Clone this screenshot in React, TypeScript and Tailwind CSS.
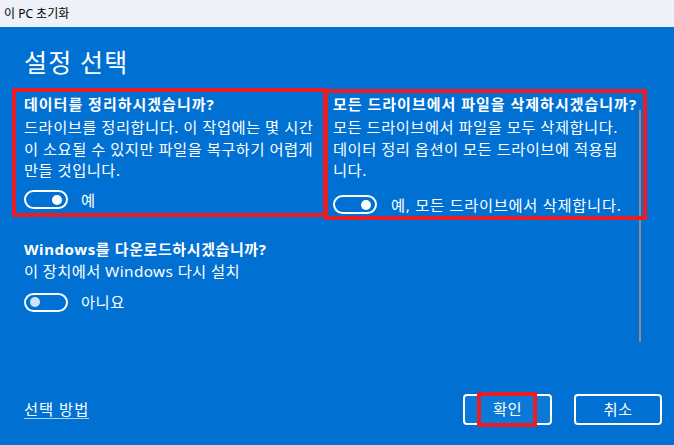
import React from "react";

function Toggle({ on }: { on: boolean }) {
  return (
    <div
      className={
        "w-[44px] h-[19px] rounded-full border-2 border-white flex items-center shrink-0 " +
        (on ? "justify-end pr-[4px]" : "justify-start pl-[4px]")
      }
    >
      <div className={"w-[10px] h-[10px] rounded-full " + (on ? "bg-white" : "bg-[#cfe4f8]")} />
    </div>
  );
}

export default function App() {
  return (
    <div className="w-[674px] h-[445px] flex flex-col bg-[#0071d3] text-white overflow-hidden font-['Noto_Sans','Noto_Sans_CJK_KR',sans-serif]">
      <div className="h-[27px] shrink-0 bg-[#eef2f8] text-black text-[12px] pl-[4px] flex items-center">
        이 PC 초기화
      </div>
      <div className="flex-1 flex flex-col pl-[24px] pr-[12px] relative">
        <h1 className="text-[25px] leading-[32px] mt-[19px] tracking-[1.2px]">설정 선택</h1>
        <div className="grid grid-cols-[309px_307px] mt-[16px]">
          <div className="flex flex-col">
            <div className="text-[15px] leading-[20px] font-bold whitespace-nowrap tracking-[1px]">데이터를 정리하시겠습니까?</div>
            <div className="text-[15.3px] leading-[21.5px] mt-[3px] whitespace-nowrap tracking-[0.5px]">
              드라이브를 정리합니다. 이 작업에는 몇 시간
              <br />이 소요될 수 있지만 파일을 복구하기 어렵게
              <br />만들 것입니다.
            </div>
            <div className="flex items-center mt-[8px] gap-[13px]">
              <Toggle on />
              <span className="text-[15.3px] leading-[20px]">예</span>
            </div>
          </div>
          <div className="flex flex-col">
            <div className="text-[15px] leading-[20px] font-bold whitespace-nowrap tracking-[1px]">모든 드라이브에서 파일을 삭제하시겠습니까?</div>
            <div className="text-[15.3px] leading-[21.5px] mt-[3px] whitespace-nowrap tracking-[0.5px]">
              모든 드라이브에서 파일을 모두 삭제합니다.
              <br />데이터 정리 옵션이 모든 드라이브에 적용됩
              <br />니다.
            </div>
            <div className="flex items-center mt-[13px] gap-[14px]">
              <Toggle on />
              <span className="text-[15.3px] leading-[20px] tracking-[0.7px]">예, 모든 드라이브에서 삭제합니다.</span>
            </div>
          </div>
        </div>
        <div className="flex flex-col mt-[24px]">
          <div className="text-[15px] leading-[20px] font-bold whitespace-nowrap tracking-[0.6px]">Windows를 다운로드하시겠습니까?</div>
          <div className="text-[15.3px] leading-[21.5px] mt-[2px] whitespace-nowrap tracking-[0.4px]">이 장치에서 Windows 다시 설치</div>
          <div className="flex items-center mt-[10px] gap-[13px]">
            <Toggle on={false} />
            <span className="text-[15.3px] leading-[20px] tracking-[0.5px]">아니요</span>
          </div>
        </div>
        <div className="mt-auto mb-[20px] flex items-center justify-between">
          <span className="text-[15.3px] leading-[18px] border-b border-[#a8d2f7] cursor-pointer tracking-[1px]">선택 방법</span>
          <div className="flex gap-[22px]">
            <button className="w-[89px] h-[31px] rounded-[4px] border-2 border-white bg-[#0a79d8] text-[15.3px] text-white tracking-[0.5px]">확인</button>
            <button className="w-[88px] h-[31px] rounded-[4px] border-2 border-white bg-[#0071d3] text-[15.3px] text-white tracking-[0.5px]">취소</button>
          </div>
        </div>
        <div className="absolute left-[639px] top-[83px] w-[2px] h-[232px] bg-[#8c8c8c]" />
        <div className="absolute left-[12px] top-[61px] w-[315px] h-[129px] border-4 border-[#ec1c24]" />
        <div className="absolute left-[324px] top-[62px] w-[323px] h-[131px] border-4 border-[#ec1c24]" />
        <div className="absolute left-[477px] top-[365px] w-[60px] h-[35px] border-4 border-[#ec1c24]" />
      </div>
    </div>
  );
}
